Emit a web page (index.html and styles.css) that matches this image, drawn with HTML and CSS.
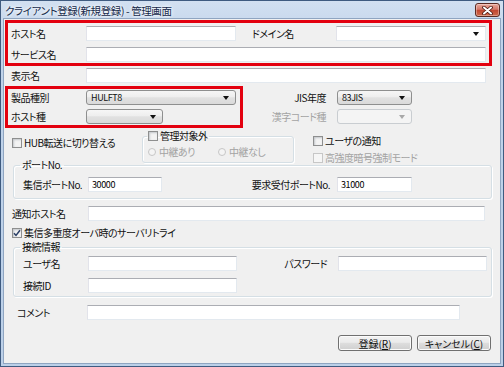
FILE: index.html
```html
<!DOCTYPE html>
<html lang="ja">
<head>
    <meta charset="UTF-8">
    <meta name="viewport" content="width=device-width, initial-scale=1.0">
    <title>クライアント登録(新規登録) - 管理画面</title>
    <link rel="stylesheet" href="styles.css">
</head>
<body>
    <div class="window">
        <div class="titlebar">
            <span class="title">クライアント登録(新規登録) - 管理画面</span>
            <button class="close" aria-label="閉じる">
                <svg width="11" height="9" viewBox="0 0 11 9">
                    <path d="M2 1.5 L9 7.5 M9 1.5 L2 7.5" stroke="#4a1810" stroke-width="3.6" stroke-linecap="round"/>
                    <path d="M2 1.5 L9 7.5 M9 1.5 L2 7.5" stroke="#fff" stroke-width="2" stroke-linecap="round"/>
                </svg>
            </button>
        </div>

        <div class="client">
            <!-- required host info -->
            <div class="mark mark-top">
                <div class="row">
                    <label class="lbl">ホスト名</label>
                    <input class="text w150">
                    <label class="lbl lbl-domain">ドメイン名</label>
                    <div class="combo edit w150"><span class="arrow"></span></div>
                </div>
                <div class="row">
                    <label class="lbl">サービス名</label>
                    <input class="text w400">
                </div>
            </div>

            <div class="row row-disp">
                <label class="lbl">表示名</label>
                <input class="text w400">
            </div>

            <div class="split">
                <div class="mark mark-product">
                    <div class="row">
                        <label class="lbl">製品種別</label>
                        <div class="combo w150"><span class="val">HULFT8</span><span class="arrow"></span></div>
                    </div>
                    <div class="row">
                        <label class="lbl">ホスト種</label>
                        <div class="combo w77"><span class="arrow"></span></div>
                    </div>
                </div>
                <div class="jis">
                    <div class="row">
                        <label class="lbl-r lbl-jis">JIS年度</label>
                        <div class="combo w75"><span class="val">83JIS</span><span class="arrow"></span></div>
                    </div>
                    <div class="row">
                        <label class="lbl-r lbl-jis disabled">漢字コード種</label>
                        <div class="combo disabled w75"><span class="arrow"></span></div>
                    </div>
                </div>
            </div>

            <div class="options">
                <div class="check opt-hub"><span class="box"></span>HUB転送に切り替える</div>
                <fieldset class="group group-mgmt">
                    <legend><span class="check"><span class="box"></span>管理対象外</span></legend>
                    <div class="radios">
                        <span class="radio disabled"><span class="dot"></span>中継あり</span>
                        <span class="radio disabled"><span class="dot"></span>中継なし</span>
                    </div>
                </fieldset>
                <div class="opt-right">
                    <div class="check"><span class="box"></span>ユーザの通知</div>
                    <div class="check disabled"><span class="box"></span>高強度暗号強制モード</div>
                </div>
            </div>

            <fieldset class="group group-port">
                <legend>ポートNo.</legend>
                <div class="row">
                    <label class="lbl lbl-in">集信ポートNo.</label>
                    <input class="text w74" value="30000">
                    <label class="lbl-r lbl-req">要求受付ポートNo.</label>
                    <input class="text w75" value="31000">
                </div>
            </fieldset>

            <div class="row row-notify">
                <label class="lbl lbl-notify">通知ホスト名</label>
                <input class="text w397">
            </div>

            <div class="check opt-retry checked">
                <span class="box">
                    <svg width="8" height="8" viewBox="0 0 8 8"><path d="M1 4.2 L3 6.4 L7 1.2" fill="none" stroke="#2b3f66" stroke-width="1.5"/></svg>
                </span>集信多重度オーバ時のサーバリトライ
            </div>

            <fieldset class="group group-conn">
                <legend>接続情報</legend>
                <div class="row">
                    <label class="lbl lbl-in">ユーザ名</label>
                    <input class="text w149">
                    <label class="lbl-r lbl-pass">パスワード</label>
                    <input class="text w149">
                </div>
                <div class="row">
                    <label class="lbl lbl-in">接続ID</label>
                    <input class="text w149">
                </div>
            </fieldset>

            <div class="row row-comment">
                <label class="lbl lbl-comment">コメント</label>
                <input class="text w373">
            </div>

            <div class="buttons">
                <button class="btn">登録(<u>R</u>)</button>
                <button class="btn">キャンセル(<u>C</u>)</button>
            </div>
        </div>
    </div>
</body>
</html>
```

FILE: styles.css
```css
* { box-sizing: border-box; }
body {
    margin: 0;
    background: #fff;
    font-family: "Noto Sans CJK JP", "Noto Sans", sans-serif;
    font-size: 10px;
    letter-spacing: -0.5px;
    font-feature-settings: "palt";
    color: #111;
}

/* window frame */
.window {
    width: 504px;
    height: 367px;
    display: flex;
    flex-direction: column;
    border: 1px solid #3f5b80;
    padding: 0 3px 3px;
    background: linear-gradient(#d2e0f1, #c0d3ea 40px, #bcd0e8);
}
.titlebar {
    height: 18px;
    display: flex;
    align-items: flex-start;
}
.title {
    padding: 3px 0 0 1px;
    font-size: 10.5px;
    line-height: 13px;
    letter-spacing: -0.4px;
    color: #15294a;
    text-shadow: 0 0 5px #fff, 0 0 3px #fff;
}
.close {
    margin: 2px 0 0 auto;
    width: 25px;
    height: 14px;
    padding: 0;
    display: flex;
    align-items: center;
    justify-content: center;
    border: 1px solid #5b2a22;
    border-radius: 3px;
    background: linear-gradient(#e9a99b, #d4786a 45%, #c1452f 50%, #cf6a4b);
    box-shadow: inset 0 0 0 1px rgba(255,255,255,0.35);
}
.client {
    flex: 1;
    background: #f0f0f0;
    box-shadow: 0 0 0 1px #8fa5c1;
}

/* rows and labels */
.row { display: flex; align-items: center; height: 15px; }
.row > * { flex: none; }
.lbl { width: 75px; line-height: 15px; white-space: nowrap; }
.lbl-r { text-align: right; white-space: nowrap; line-height: 15px; }
.disabled { color: #a3a3a3; }

.mark { border: 3px solid #e3000f; }
.mark-top {
    margin: 1px 0 0 1px;
    width: 487px;
    height: 46px;
    padding: 3px 0 0 3px;
    display: flex;
    flex-direction: column;
    gap: 6px;
}
.lbl-domain { width: 84px; margin-left: 16px; }
.row-disp { margin-top: 2px; padding-left: 7px; }

.split { display: flex; margin-top: 3px; }
.mark-product {
    margin-left: 1px;
    width: 238px;
    height: 42px;
    padding: 1px 0 0 3px;
    display: flex;
    flex-direction: column;
    gap: 4px;
}
.jis { padding-top: 4px; display: flex; flex-direction: column; gap: 4px; }
.lbl-jis { width: 94px; padding-right: 11px; }

/* widths */
.w74 { width: 74px; }
.w75 { width: 75px; }
.w77 { width: 77px; }
.w149 { width: 149px; }
.w150 { width: 150px; }
.w373 { width: 373px; }
.w397 { width: 397px; }
.w400 { width: 400px; }

/* text boxes and combos */
.text {
    height: 15px;
    margin: 0;
    padding: 0 3px;
    border: 1px solid;
    border-color: #abadb3 #e3e9ef #e3e9ef #e2e3ea;
    background: #fff;
    font: inherit;
    font-size: 9px;
    letter-spacing: -0.4px;
    color: #000;
    outline: none;
}
.combo {
    height: 15px;
    display: flex;
    align-items: center;
    padding: 0 6px 0 4px;
    border: 1px solid #8e8f8f;
    border-radius: 3px;
    background: linear-gradient(#f6f6f6, #eeeeee 45%, #e1e1e1 52%, #dadada);
    font-size: 9px;
    letter-spacing: -0.4px;
}
.combo.edit {
    border-radius: 0;
    border-color: #abadb3 #e3e9ef #e3e9ef #e2e3ea;
    background: #fff;
}
.combo.disabled {
    border-color: #c9cdd1;
    background: #f4f4f4;
}
.arrow {
    margin-left: auto;
    width: 0;
    height: 0;
    border-left: 3px solid transparent;
    border-right: 3px solid transparent;
    border-top: 4px solid #111;
}
.combo.disabled .arrow { border-top-color: #a8a8a8; }

/* checkboxes and radios */
.check {
    display: flex;
    align-items: center;
    gap: 2px;
    height: 12px;
    line-height: 12px;
    white-space: nowrap;
}
.box {
    width: 10px;
    height: 10px;
    flex: none;
    display: flex;
    align-items: center;
    justify-content: center;
    border: 1px solid #8e8f8f;
    background: #f3f3f3;
    box-shadow: inset 1px 1px 2px #c3c6cb;
}
.check.disabled .box {
    border-color: #c7c7c7;
    background: #f6f6f6;
    box-shadow: none;
}
.radio {
    display: inline-flex;
    align-items: center;
    gap: 3px;
    width: 70px;
    height: 12px;
    line-height: 12px;
}
.dot {
    width: 8px;
    height: 8px;
    border: 1px solid #c6c6c6;
    border-radius: 50%;
    background: #f4f4f4;
}

.options { display: flex; align-items: flex-start; height: 35px; }
.opt-hub { margin: 9px 0 0 8px; width: 130px; }
.opt-right {
    margin: 7px 0 0 19px;
    display: flex;
    flex-direction: column;
    gap: 5px;
}

/* group boxes */
.group {
    margin: 0;
    min-width: 0;
    border: 1px solid #d5dfe5;
    border-radius: 3px;
    box-shadow: inset 1px 1px 0 #fff, 1px 1px 0 #fff;
}
.group legend {
    padding: 0 2px;
    line-height: 12px;
}
.group-mgmt {
    margin-top: 2px;
    width: 152px;
    height: 33px;
    padding: 4px 0 0 4px;
}
.group-mgmt legend { padding: 0 1px; }
.radios { display: flex; }
.radios .radio:first-child { margin-left: 1px; }

.group-port {
    margin: -4px 0 0 9px;
    width: 479px;
    padding: 6px 0 6px 6px;
}
.lbl-in { width: 65px; margin-left: 3px; }
.lbl-req { width: 175px; padding-right: 7px; }

.row-notify { margin-top: 7px; padding-left: 8px; }
.lbl-notify { width: 76px; }

.opt-retry { margin: 6px 0 0 8px; }

.group-conn {
    margin: 2px 0 0 9px;
    width: 479px;
    padding: 3px 0 3px 6px;
    display: flex;
    flex-direction: column;
    gap: 7px;
}
.lbl-pass { width: 101px; padding-right: 11px; }

.row-comment { margin-top: 8px; padding-left: 13px; }
.lbl-comment { width: 70px; }

/* dialog buttons */
.buttons {
    display: flex;
    justify-content: flex-end;
    gap: 5px;
    margin-top: 15px;
    padding-right: 9px;
}
.btn {
    width: 74px;
    height: 16px;
    padding: 0;
    border: 1px solid #707070;
    border-radius: 3px;
    background: linear-gradient(#f2f2f2, #ebebeb 45%, #dddddd 52%, #cfcfcf);
    box-shadow: inset 0 0 0 1px #fbfbfb;
    font: inherit;
    line-height: 13px;
    color: #111;
}
```
